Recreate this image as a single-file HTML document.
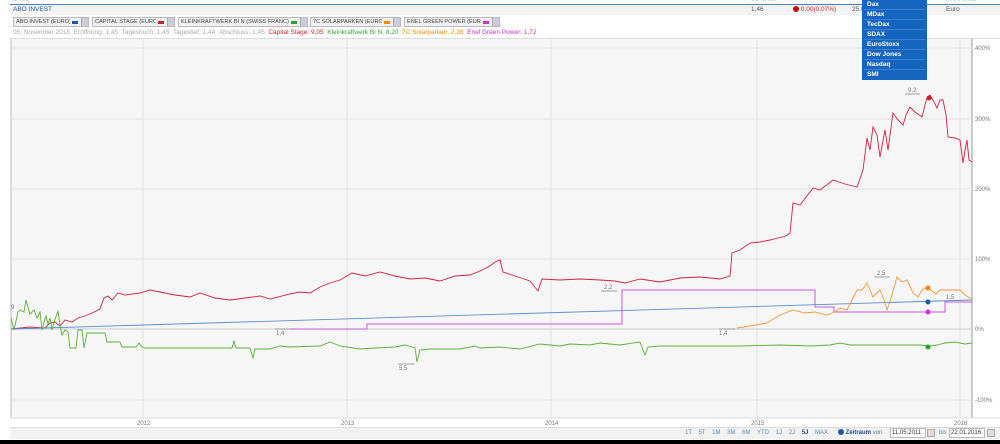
<!DOCTYPE html>
<html><head><meta charset="utf-8"><style>
*{margin:0;padding:0;box-sizing:border-box}
body{width:1000px;height:444px;overflow:hidden;background:#fff;font-family:"Liberation Sans",sans-serif;font-size:7px;color:#666;position:relative}
.abs{position:absolute}
.btn{position:absolute;top:17px;height:10px;border:1px solid #bbb;background:#f0f0f0;font-size:5.6px;line-height:8px;padding-left:2px;color:#444;white-space:nowrap;overflow:hidden;display:flex;align-items:center}
.btn span{flex:1;min-width:0;overflow:hidden}
.btn i{flex:none;display:inline-block;width:6px;height:3px;margin:0 3px 0 2px}
.btn b{flex:none;display:inline-block;width:7px;height:8px;background:#ccd;border-left:1px solid #aaa}
.dd{position:absolute;left:862px;top:0;width:65px;height:80px;background:#1565c0;color:#fff;font-size:6.5px;font-weight:bold}
.dd div{height:10px;line-height:10px;padding-left:3px;border-bottom:1px solid #3a7fd0;margin:0 2px}
.tb{position:absolute;top:428px;height:10px;font-size:6px;line-height:10px;color:#58a}
</style></head><body>
<div class="abs" style="left:12px;top:-3px;color:#bbb;font-size:6px">NAME</div>
<div class="abs" style="left:752px;top:-3px;color:#bbb;font-size:6px">LETZTER</div>
<div class="abs" style="left:945px;top:-3px;color:#bbb;font-size:6px">WÄHRUNG</div>
<div class="abs" style="left:10px;top:4px;width:990px;height:1px;background:#4a80c0"></div>
<div class="abs" style="left:10px;top:5px;width:990px;height:10px;background:#f3f3f3"></div>
<div class="abs" style="left:13px;top:6px;color:#1a5aa0;font-size:6.5px">ABO INVEST</div>
<div class="abs" style="left:751px;top:6px;color:#555;font-size:6.5px">1,46</div>
<div class="abs" style="left:793px;top:6px;color:#d02030;font-size:6.5px"><span style="display:inline-block;width:6px;height:6px;border-radius:3px;background:#c00;vertical-align:-1px"></span> 0,00(0,07%)</div>
<div class="abs" style="left:852px;top:6px;color:#555;font-size:6.5px">25.0</div>
<div class="abs" style="left:946px;top:6px;color:#555;font-size:6.5px">Euro</div>
<div class="btn" style="left:13px;width:76px"><span>ABO INVEST (EURO)</span><i style="background:#1a5aa0"></i><b></b></div>
<div class="btn" style="left:92px;width:83px"><span>CAPITAL STAGE (EURO)</span><i style="background:#d02030"></i><b></b></div>
<div class="btn" style="left:178px;width:130px"><span>KLEINKRAFTWERK BI N (SWISS FRANC)</span><i style="background:#2a2"></i><b></b></div>
<div class="btn" style="left:310px;width:91px"><span>7C SOLARPARKEN (EURO)</span><i style="background:#f80"></i><b></b></div>
<div class="btn" style="left:404px;width:96px"><span>ENEL GREEN POWER (EURO)</span><i style="background:#c3c"></i><b></b></div>
<div class="abs" style="left:13px;top:29px;color:#aaa;white-space:nowrap;font-size:6.5px">05. November 2015 &nbsp;Eröffnung: 1,45 &nbsp;Tageshoch: 1,45 &nbsp;Tagestief: 1,44 &nbsp;Abschluss: 1,45 &nbsp;<span style="color:#d02030">Capital Stage: 9,05</span> &nbsp;<span style="color:#3a3">Kleinkraftwerk Bi N: 8,20</span> &nbsp;<span style="color:#f80">7C Solarparken: 2,28</span> &nbsp;<span style="color:#c3c">Enel Green Power: 1,72</span></div>
<div class="abs" style="left:10px;top:38px;width:990px;height:1px;background:#ddd"></div>
<svg class="abs" style="left:0;top:0" width="1000" height="444">
<rect x="11" y="39" width="961" height="379" fill="#f6f6f6"/>
<line x1="11" y1="39" x2="11" y2="418" stroke="#bbb"/>
<line x1="972" y1="39" x2="972" y2="418" stroke="#999"/>
<g stroke="#e2e2e2" stroke-width="1">
<line x1="11" y1="48" x2="972" y2="48"/><line x1="11" y1="119" x2="972" y2="119"/><line x1="11" y1="189" x2="972" y2="189"/><line x1="11" y1="259" x2="972" y2="259"/><line x1="11" y1="400" x2="972" y2="400"/>
<line x1="143" y1="39" x2="143" y2="418"/><line x1="347" y1="39" x2="347" y2="418"/><line x1="551" y1="39" x2="551" y2="418"/><line x1="757" y1="39" x2="757" y2="418"/><line x1="960" y1="39" x2="960" y2="418"/>
</g>
<line x1="11" y1="329" x2="972" y2="329" stroke="#ccc"/>
<line x1="11" y1="418" x2="1000" y2="418" stroke="#ddd"/>
<polyline fill="none" stroke="#d22040" stroke-width="0.9" points="11,329 30,327 45,328 50,323 55,322 60,326 65,320 72,322 78,318 85,316 92,313 100,309 104,298 108,296 112,300 118,293 125,295 140,293 150,290 160,292 175,295 190,297 200,293 215,298 230,300 245,298 260,296 270,299 290,294 300,292 310,293 320,287 330,283 340,280 347,276 352,273 365,276 380,272 395,276 410,279 425,278 440,281 455,276 470,275 480,271 490,266 495,262 500,260 503,272 515,276 530,281 538,291 542,279 560,280 580,279 600,280 615,281 625,283 640,279 660,282 680,278 700,277 720,279 730,276 732,253 740,250 750,243 760,242 770,240 778,238 786,236 790,233 793,203 800,205 813,188 820,190 833,180 845,184 857,187 863,170 867,138 870,150 873,127 877,135 880,157 885,130 888,150 893,113 898,120 903,125 906,115 910,107 915,112 922,117 925,105 927,98 930,95 933,100 937,108 940,100 943,100 946,115 948,137 955,138 960,140 963,163 965,150 967,140 969,160 972,162"/>
<polyline fill="none" stroke="#5a8ccc" stroke-width="0.9" points="11,329 972,300"/>
<polyline fill="none" stroke="#c858d8" stroke-width="1" points="290,329 367,329 367,324 622,324 622,290 815,290 815,307 834,307 834,312 945,312 945,302 972,302"/>
<polyline fill="none" stroke="#f7963a" stroke-width="0.9" points="737,328 750,326 767,323 780,315 793,310 805,313 815,312 827,315 835,312 840,308 847,310 852,300 857,290 862,290 867,283 870,290 873,297 877,293 880,290 884,300 887,310 892,295 897,277 902,282 907,280 913,293 918,297 922,290 927,287 932,291 936,294 940,290 950,290 960,290 965,295 970,298 972,298"/>
<polyline fill="none" stroke="#5cae3c" stroke-width="0.9" points="11,318 14,330 18,312 20,310 24,312 26,300 30,314 34,310 37,318 40,312 42,330 44,322 46,316 48,324 50,318 52,330 54,322 58,311 60,325 62,335 65,330 68,332 70,348 76,348 78,330 82,330 84,348 87,333 105,333 107,342 120,342 122,347 136,347 139,343 142,347 145,348 195,348 232,348 234,341 236,348 250,348 253,358 255,349 270,349 280,346 290,347 320,346 330,342 340,346 360,349 375,348 395,347 405,345 415,348 417,362 420,350 430,349 460,349 475,346 480,348 500,347 520,349 540,344 560,346 570,344 590,345 600,343 620,345 640,342 645,355 648,347 660,346 700,346 740,346 780,345 810,346 830,345 840,343 850,345 870,345 900,345 920,345 930,346 937,345 945,343 955,342 965,344 972,343"/>
<circle cx="929" cy="98" r="2.5" fill="#d02030"/>
<circle cx="928" cy="288" r="2.5" fill="#f80"/>
<circle cx="928" cy="302" r="2.5" fill="#1a5aa0"/>
<circle cx="928" cy="312" r="2.5" fill="#c3c"/>
<circle cx="928" cy="347" r="2.5" fill="#2a2"/>
<g font-size="6" fill="#777" font-family="Liberation Sans">
<text x="975" y="50">400%</text><text x="975" y="121">300%</text><text x="975" y="191">200%</text><text x="975" y="261">100%</text><text x="975" y="331">0%</text><text x="975" y="402">-100%</text>
<text x="137" y="425">2012</text><text x="341" y="425">2013</text><text x="545" y="425">2014</text><text x="751" y="425">2015</text><text x="954" y="425">2016</text>
<text x="908" y="92">9,2</text><text x="877" y="275">2,5</text><text x="604" y="289">2,2</text><text x="946" y="299">1,5</text><text x="276" y="335">1,4</text><text x="719" y="335">1,4</text><text x="399" y="370">5,5</text><text x="11" y="309">9</text>
</g>
<g stroke="#888" stroke-width="0.8"><line x1="905" y1="94" x2="920" y2="94"/><line x1="874" y1="277" x2="890" y2="277"/><line x1="601" y1="291" x2="617" y2="291"/><line x1="275" y1="329" x2="290" y2="329"/><line x1="719" y1="329" x2="735" y2="329"/><line x1="398" y1="364" x2="415" y2="364"/></g>
</svg>
<div class="dd"><div>Dax</div><div>MDax</div><div>TecDax</div><div>SDAX</div><div>EuroStoxx</div><div>Dow Jones</div><div>Nasdaq</div><div style="border:none">SMI</div></div>
<div class="abs" style="left:10px;top:427px;width:990px;height:12px;background:#f2f2f2;border-top:1px solid #ddd"></div>
<div class="tb" style="left:685px;word-spacing:5px">1T 5T 1M 3M 6M YTD 1J 2J <b style="color:#1a4a90">5J</b> MAX</div>
<div class="tb" style="left:838px;color:#1a4a90;font-weight:bold"><span style="display:inline-block;width:6px;height:6px;border-radius:3px;background:#1a5aa0;vertical-align:-1px"></span> Zeitraum <span style="font-weight:normal;color:#58a">von</span></div>
<div class="abs" style="left:890px;top:428px;width:36px;height:10px;border:1px solid #bbb;background:#fff;font-size:6px;line-height:8px;color:#333;padding-left:1px">11.05.2011</div>
<div class="abs" style="left:927px;top:429px;width:8px;height:8px;border:1px solid #aaa;background:#ddd"></div>
<div class="tb" style="left:939px">bis</div>
<div class="abs" style="left:949px;top:428px;width:36px;height:10px;border:1px solid #bbb;background:#fff;font-size:6px;line-height:8px;color:#333;padding-left:1px">22.01.2016</div>
<div class="abs" style="left:987px;top:429px;width:8px;height:8px;border:1px solid #aaa;background:#ddd"></div>
<div class="abs" style="left:0;top:440px;width:1000px;height:4px;background:#000"></div>
</body></html>
